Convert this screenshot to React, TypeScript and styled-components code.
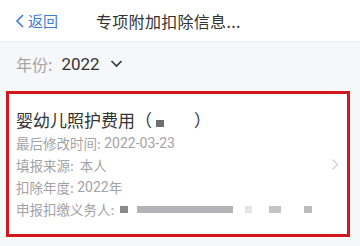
import { FC } from 'react';
import styled, { createGlobalStyle } from 'styled-components';

const GlobalStyle = createGlobalStyle`
    html, body {
        margin: 0;
        padding: 0;
        background: #f6f7f9;
        font-family: "Noto Sans CJK SC", "Noto Sans", sans-serif;
    }
`;

const StyledPage = styled.div`
    width: 360px;
    height: 246px;
    background: #f6f7f9;
    overflow: hidden;
`;

const StyledHeader = styled.div`
    height: 42px;
    display: flex;
    align-items: center;
    background: #fff;
    border-bottom: 1px solid #ececee;
    box-sizing: border-box;
`;

const StyledBack = styled.div`
    display: flex;
    align-items: center;
    width: 96px;
    padding-left: 13px;
    box-sizing: border-box;
    color: #3f7ad9;
    font-size: 15px;
    svg{
        width: 14px;
        height: 16px;
        margin-right: 1px;
    }
`;

const StyledTitle = styled.div`
    font-size: 16px;
    color: #333;
    letter-spacing: 0.3px;
`;

const StyledYearRow = styled.div`
    height: 43px;
    display: flex;
    align-items: center;
    padding: 0 16px;
    font-size: 16px;
    .label{
        color: #a5a5a8;
    }
    .value{
        color: #333;
        margin-left: 9px;
        font-size: 17px;
        font-family: Roboto, "Noto Sans", sans-serif;
    }
    svg{
        width: 13px;
        height: 9px;
        margin-left: 10px;
    }
`;

const StyledCard = styled.div`
    margin: 6px 10px 0 6px;
    border: 3px solid #d3171d;
    background: #fff;
    padding: 14px 8px 14px 7px;
    display: flex;
    align-items: center;
`;

const StyledContent = styled.div`
    flex: 1;
`;

const StyledCardTitle = styled.div`
    font-size: 17px;
    line-height: 24px;
    color: #333;
    display: flex;
    align-items: center;
`;

const StyledRow = styled.div`
    font-size: 13.5px;
    line-height: 22px;
    color: #a3a3a6;
    display: flex;
    align-items: center;
    .num{
        font-family: Roboto, "Noto Sans", sans-serif;
        font-size: 14px;
    }
`;

const StyledMask = styled.span<{ w: number; c: string; ml: number }>`
    display: inline-block;
    width: ${p => p.w}px;
    height: 7px;
    margin-left: ${p => p.ml}px;
    background: ${p => p.c};
`;

const StyledChevron = styled.svg`
    width: 8px;
    height: 13px;
    flex-shrink: 0;
`;

const App: FC = () => {
    return (
        <StyledPage>
            <GlobalStyle />
            <StyledHeader>
                <StyledBack>
                    <svg viewBox="0 0 14 16"><path d="M10 2 L4 8 L10 14" fill="none" stroke="#3f7ad9" strokeWidth="1.6" /></svg>
                    返回
                </StyledBack>
                <StyledTitle>专项附加扣除信息...</StyledTitle>
            </StyledHeader>
            <StyledYearRow>
                <span className='label'>年份:</span>
                <span className='value'>2022</span>
                <svg viewBox="0 0 13 9"><path d="M1.5 2 L6.5 7 L11.5 2" fill="none" stroke="#333" strokeWidth="1.6" /></svg>
            </StyledYearRow>
            <StyledCard>
                <StyledContent>
                    <StyledCardTitle>
                        婴幼儿照护费用（
                        <StyledMask w={8} c="#6e6e70" ml={4} style={{ marginTop: 6 }} />
                        <span style={{ marginLeft: 30 }}>）</span>
                    </StyledCardTitle>
                    <StyledRow>最后修改时间: <span className='num'>&nbsp;2022-03-23</span></StyledRow>
                    <StyledRow>填报来源: &nbsp;本人</StyledRow>
                    <StyledRow>扣除年度: <span className='num'>&nbsp;2022</span>年</StyledRow>
                    <StyledRow>
                        申报扣缴义务人:
                        <StyledMask w={8} c="#8a8a8d" ml={6} />
                        <StyledMask w={96} c="#b4b4b8" ml={9} />
                        <StyledMask w={7} c="#e4e4e6" ml={12} />
                        <StyledMask w={12} c="#c4c4c7" ml={17} />
                        <StyledMask w={8} c="#bcbcbe" ml={23} />
                    </StyledRow>
                </StyledContent>
                <StyledChevron viewBox="0 0 8 13"><path d="M1.5 1.5 L6.5 6.5 L1.5 11.5" fill="none" stroke="#d0d0d3" strokeWidth="1.3" /></StyledChevron>
            </StyledCard>
        </StyledPage>
    );
};

export default App;
